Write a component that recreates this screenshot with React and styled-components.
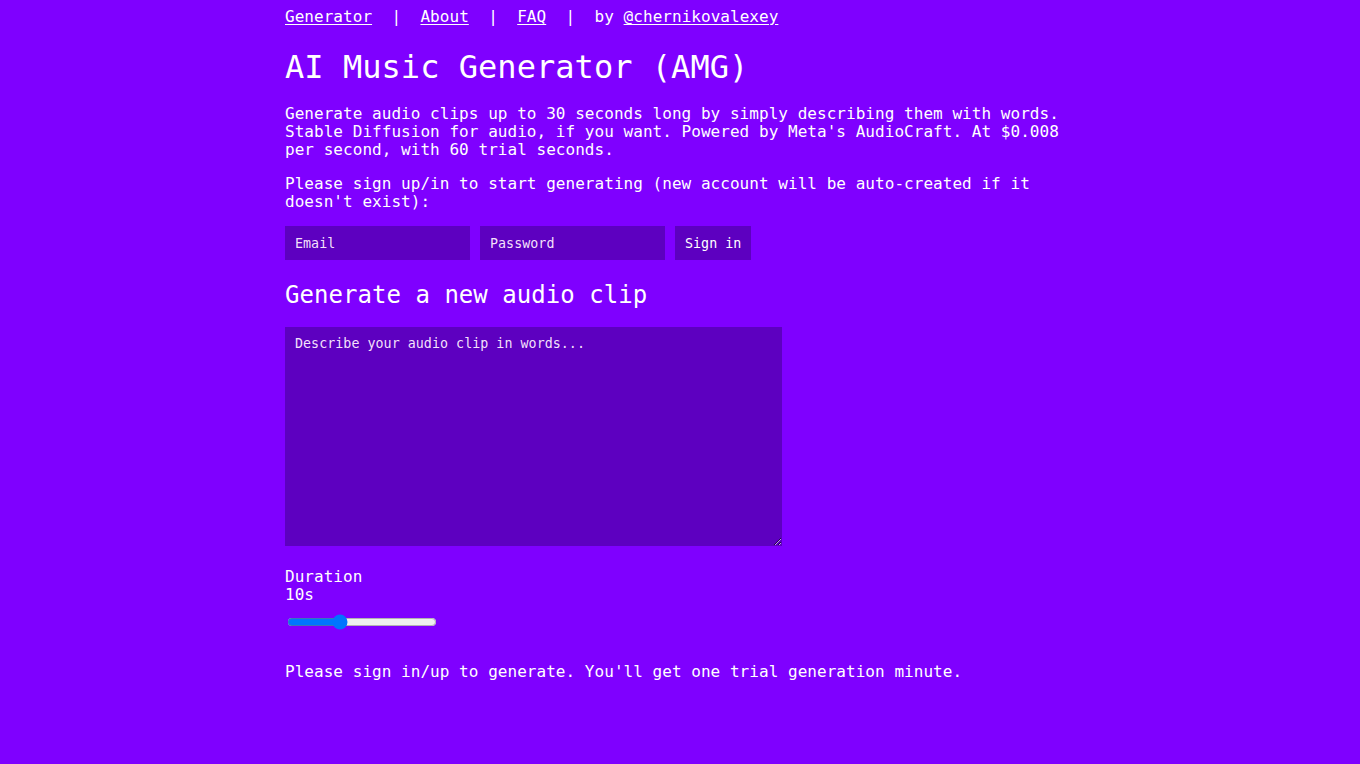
import React from "react";
import styled, { createGlobalStyle } from "styled-components";

const Global = createGlobalStyle`
  html, body {
    margin: 0;
    padding: 0;
    background: #7f00ff;
  }
  body {
    color: #ffffff;
    font-family: "DejaVu Sans Mono", "Liberation Mono", monospace;
    font-size: 16px;
    line-height: 18px;
    letter-spacing: 0.0025em;
  }
`;

const Page = styled.main`
  max-width: 790px;
  margin: 0 auto;
  padding: 8px 0 40px;
`;

const Nav = styled.nav`
  white-space: pre;
  font-size: 16px;
  line-height: 18px;
`;

const NavLink = styled.a`
  color: #ffffff;
  text-decoration: underline;
  text-underline-offset: 2px;
`;

const Title = styled.h1`
  font-size: 32px;
  line-height: 36px;
  font-weight: normal;
  margin: 22.5px 0 20.5px;
`;

const Subtitle = styled.h2`
  font-size: 24px;
  line-height: 27px;
  font-weight: normal;
  margin: 22px 0 18px;
`;

const Para = styled.p`
  margin: 16px 0 ${(p) => (p.$tight ? "15px" : "16px")};
  line-height: 18px;
`;

const Form = styled.form`
  display: flex;
  gap: 10px;
  margin: 0;
`;

const Field = styled.input`
  width: 185px;
  height: 34px;
  box-sizing: border-box;
  border: none;
  outline: none;
  padding: 0 10px;
  background: #5d00c0;
  color: #ffffff;
  font-family: "DejaVu Sans Mono", "Liberation Mono", monospace;
  font-size: 13.333px;
  letter-spacing: 0.03px;
  &::placeholder {
    color: rgba(255, 240, 255, 0.95);
  }
`;

const Button = styled.button`
  height: 34px;
  box-sizing: border-box;
  border: none;
  padding: 0 10px;
  background: #5d00c0;
  color: #ffffff;
  font-family: "DejaVu Sans Mono", "Liberation Mono", monospace;
  font-size: 13.333px;
  letter-spacing: 0.03px;
  cursor: pointer;
`;

const Prompt = styled.textarea`
  display: block;
  width: 497px;
  height: 219px;
  box-sizing: border-box;
  border: none;
  outline: none;
  padding: 9px 10px 10px;
  margin: 0;
  background: #5d00c0;
  color: #ffffff;
  font-family: "DejaVu Sans Mono", "Liberation Mono", monospace;
  font-size: 13.333px;
  line-height: 16px;
  letter-spacing: 0.03px;
  &::placeholder {
    color: rgba(255, 240, 255, 0.95);
  }
`;

const Duration = styled.div`
  margin-top: 22px;
  line-height: 18px;
`;

const Slider = styled.input`
  display: block;
  width: 150px;
  margin: 10px 2px 0;
`;

const Notice = styled.p`
  margin: 33px 0 0;
  line-height: 18px;
`;

export default function App() {
  return (
    <>
      <Global />
      <Page>
        <Nav>
          <NavLink href="#">Generator</NavLink>
          {"  |  "}
          <NavLink href="#">About</NavLink>
          {"  |  "}
          <NavLink href="#">FAQ</NavLink>
          {"  |  by "}
          <NavLink href="#">@chernikovalexey</NavLink>
        </Nav>
        <Title>AI Music Generator (AMG)</Title>
        <Para>
          Generate audio clips up to 30 seconds long by simply describing them
          with words. Stable Diffusion for audio, if you want. Powered by
          Meta's AudioCraft. At $0.008 per second, with 60 trial seconds.
        </Para>
        <Para $tight>
          Please sign up/in to start generating (new account will be
          auto-created if it doesn't exist):
        </Para>
        <Form onSubmit={(e) => e.preventDefault()}>
          <Field type="email" placeholder="Email" />
          <Field type="password" placeholder="Password" />
          <Button type="submit">Sign in</Button>
        </Form>
        <Subtitle>Generate a new audio clip</Subtitle>
        <Prompt placeholder="Describe your audio clip in words..." />
        <Duration>
          Duration
          <br />
          10s
        </Duration>
        <Slider type="range" min="0" max="30" defaultValue="10" />
        <Notice>
          Please sign in/up to generate. You'll get one trial generation
          minute.
        </Notice>
      </Page>
    </>
  );
}
